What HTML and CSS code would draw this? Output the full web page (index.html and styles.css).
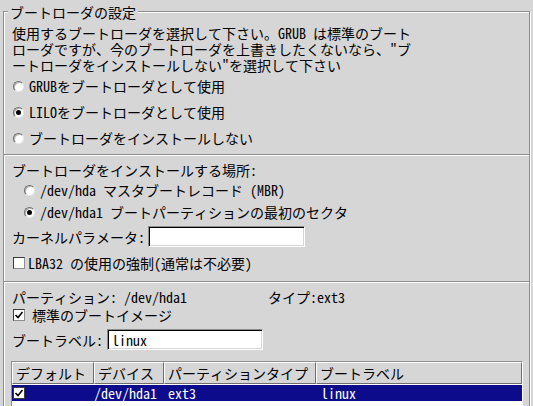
FILE: index.html
```html
<!DOCTYPE html>
<html lang="ja">
<head>
    <meta charset="UTF-8">
    <title>ブートローダの設定</title>
    <link rel="stylesheet" href="styles.css">
</head>
<body>
    <div class="frame">
        <div class="frame-title">ブートローダの設定</div>

        <!-- which boot loader -->
        <div class="section">
            <p class="desc">使用するブートローダを選択して下さい。GRUB は標準のブート<br>ローダですが、今のブートローダを上書きしたくないなら、"ブ<br>ートローダをインストールしない"を選択して下さい</p>
            <ul class="radios loader">
                <li><span class="radio"></span>GRUBをブートローダとして使用</li>
                <li><span class="radio on"></span>LILOをブートローダとして使用</li>
                <li><span class="radio"></span>ブートローダをインストールしない</li>
            </ul>
        </div>
        <div class="sep sep-1"></div>

        <!-- where to install -->
        <div class="section">
            <div class="place-label">ブートローダをインストールする場所:</div>
            <ul class="radios place">
                <li><span class="radio"></span>/dev/hda マスタブートレコード (MBR)</li>
                <li><span class="radio on"></span>/dev/hda1 ブートパーティションの最初のセクタ</li>
            </ul>
            <div class="field kernel">
                <span>カーネルパラメータ:</span>
                <span class="entry"></span>
            </div>
            <div class="check-row lba">
                <span class="check"></span>LBA32 の使用の強制(通常は不必要)
            </div>
        </div>
        <div class="sep sep-2"></div>

        <!-- boot image -->
        <div class="section">
            <div class="info">
                <span class="part">パーティション: /dev/hda1</span>
                <span>タイプ:ext3</span>
            </div>
            <div class="check-row std">
                <span class="check"><svg viewBox="0 0 10 10" width="10" height="10"><path d="M1.5 5 L4 7.5 L8.5 2" fill="none" stroke="#000" stroke-width="1.6"/></svg></span>標準のブートイメージ
            </div>
            <div class="field bootlabel">
                <span>ブートラベル:</span>
                <span class="entry">linux</span>
            </div>

            <div class="clist">
                <div class="clist-head">
                    <div>デフォルト</div>
                    <div>デバイス</div>
                    <div>パーティションタイプ</div>
                    <div>ブートラベル</div>
                </div>
                <div class="clist-row selected">
                    <div><span class="check"><svg viewBox="0 0 10 10" width="10" height="10"><path d="M1.5 5 L4 7.5 L8.5 2" fill="none" stroke="#000" stroke-width="1.6"/></svg></span></div>
                    <div class="c-dev">/dev/hda1</div>
                    <div class="c-type">ext3</div>
                    <div class="c-label">linux</div>
                </div>
            </div>
        </div>
    </div>
</body>
</html>
```

FILE: styles.css
```css
/* Reset */
* {
    box-sizing: border-box;
}

body {
    margin: 0;
    width: 533px;
    height: 406px;
    overflow: hidden;
    background-color: #d6d6d6;
    color: #000;
    font-family: "Noto Sans Mono CJK JP", "Noto Sans CJK JP", monospace;
    font-size: 14px;
    line-height: 16px;
}

p, ul {
    margin: 0;
    padding: 0;
}

/* Etched frame */
.frame {
    margin: 11px 0 0 3px;
    width: 527px;
    height: 430px;
    border: 1px solid #8e8e8e;
    box-shadow: 1px 1px 0 #fff, inset 1px 1px 0 #fff;
}

.frame-title {
    width: fit-content;
    margin: -8px 0 0 4px;
    padding: 0 2px;
    background-color: #d6d6d6;
}

.section {
    padding-left: 8px;
    white-space: nowrap;
}

.sep {
    height: 2px;
    border-top: 1px solid #8e8e8e;
    border-bottom: 1px solid #fff;
}

.sep-1 {
    margin-top: 3px;
}

.sep-2 {
    margin-top: 7px;
}

.desc {
    margin-top: 5px;
}

/* Radio buttons */
.radios {
    list-style-type: none;
}

.radios li {
    display: flex;
    align-items: center;
}

.radios.loader li {
    height: 26px;
}

.radios.place {
    margin-top: 1px;
}

.radios.place li {
    height: 22px;
}

.radio {
    position: relative;
    width: 11px;
    height: 11px;
    margin-right: 5px;
    border-radius: 50%;
    background-color: #fff;
    border: 1px solid;
    border-color: #6e6e6e #e8e8e8 #e8e8e8 #6e6e6e;
    box-shadow: inset 1px 1px 0 #b4b4b4;
}

.radios.loader .radio {
    margin-left: 1px;
}

.radios.place .radio {
    margin-left: 12px;
}

.radio.on::after {
    content: "";
    position: absolute;
    left: 2px;
    top: 2px;
    width: 5px;
    height: 5px;
    border-radius: 50%;
    background-color: #000;
}

.place-label {
    margin-top: 6px;
}

/* Entries */
.field {
    display: flex;
    align-items: center;
    height: 21px;
}

.entry {
    height: 21px;
    padding: 1px 0 0 4px;
    background-color: #fff;
    border: 1px solid;
    border-color: #8e8e8e #fff #fff #8e8e8e;
    box-shadow: inset 1px 1px 0 #000, inset -1px -1px 0 #d6d6d6;
    line-height: 18px;
}

.kernel {
    margin-top: 3px;
}

.kernel .entry {
    width: 157px;
    margin-left: 3px;
}

.bootlabel {
    margin-top: 4px;
}

.bootlabel .entry {
    width: 156px;
    margin-left: 4px;
}

/* Check buttons */
.check-row {
    display: flex;
    align-items: center;
}

.check {
    display: flex;
    align-items: center;
    justify-content: center;
    width: 12px;
    height: 12px;
    background-color: #fff;
    border: 1px solid;
    border-color: #3c3c3c #8e8e8e #8e8e8e #3c3c3c;
}

.lba {
    margin-top: 5px;
    height: 22px;
}

.lba .check {
    margin: 0 3px 0 1px;
}

.std {
    height: 20px;
}

.std .check {
    margin: 0 7px 0 1px;
}

.info {
    display: flex;
    margin-top: 6px;
}

.info .part {
    width: 256px;
}

/* Column list */
.clist {
    margin: 11px 0 0 -1px;
    width: 512px;
    height: 60px;
    background-color: #fff;
    border: 1px solid;
    border-color: #8e8e8e #fff #fff #8e8e8e;
}

.clist-head,
.clist-row {
    display: grid;
    grid-template-columns: 82px 70px 152px 1fr;
}

.clist-head div {
    height: 22px;
    padding: 2px 0 0 3px;
    background-color: #d6d6d6;
    border-top: 1px solid #fff;
    border-left: 1px solid #fff;
    border-right: 1px solid #6e6e6e;
    border-bottom: 1px solid #6e6e6e;
}

.clist-row {
    margin-top: 1px;
    height: 16px;
    align-items: center;
}

.clist-row.selected {
    background-color: #0b0b8c;
    color: #fff;
}

.clist-row .check {
    margin-left: 1px;
    border-color: #3c3c3c;
}

.c-type {
    padding-left: 4px;
}

.c-label {
    padding-left: 5px;
}
```
